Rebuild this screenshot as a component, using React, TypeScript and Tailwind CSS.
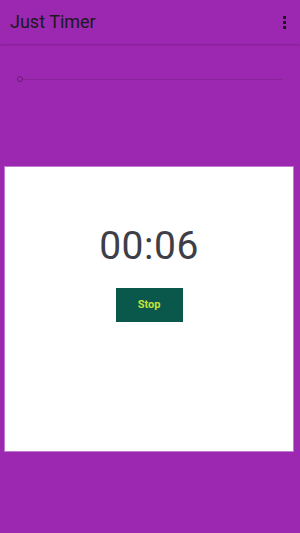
import React from 'react';

const App: React.FC = () => {
  return (
    <div className="w-[300px] h-[533px] bg-[#9c27b0] flex flex-col" style={{ fontFamily: 'Roboto, "Liberation Sans", sans-serif' }}>
      <header className="h-[44px] flex items-center justify-between pl-[10px] pr-[14px] shadow-[0_1px_2px_rgba(0,0,0,0.18)]">
        <h1 className="text-[18px] text-[#1a1a1a] leading-none">Just Timer</h1>
        <div className="flex flex-col gap-[2px]">
          <span className="w-[3px] h-[3px] bg-[#1a1a1a]" />
          <span className="w-[3px] h-[3px] bg-[#1a1a1a]" />
          <span className="w-[3px] h-[3px] bg-[#1a1a1a]" />
        </div>
      </header>

      <div className="h-[122px] pt-[32px] pl-[17px] pr-[18px]">
        <div className="flex items-center h-[6px]">
          <span className="w-[6px] h-[6px] rounded-full border border-[#6a1b7a] shrink-0" />
          <span className="flex-1 h-px bg-[#8a2299]" />
        </div>
      </div>

      <main className="mx-[4px] mr-[6px] h-[286px] bg-white border border-[#c07ad0] flex flex-col items-center pt-[60px]">
        <div className="text-[39px] text-[#3e3e48] leading-none tracking-[0.5px]">00:06</div>
        <button className="mt-[22px] w-[67px] h-[34px] bg-[#0a584c] text-[#c5e03a] text-[11px] font-bold">
          Stop
        </button>
      </main>
    </div>
  );
};

export default App;
